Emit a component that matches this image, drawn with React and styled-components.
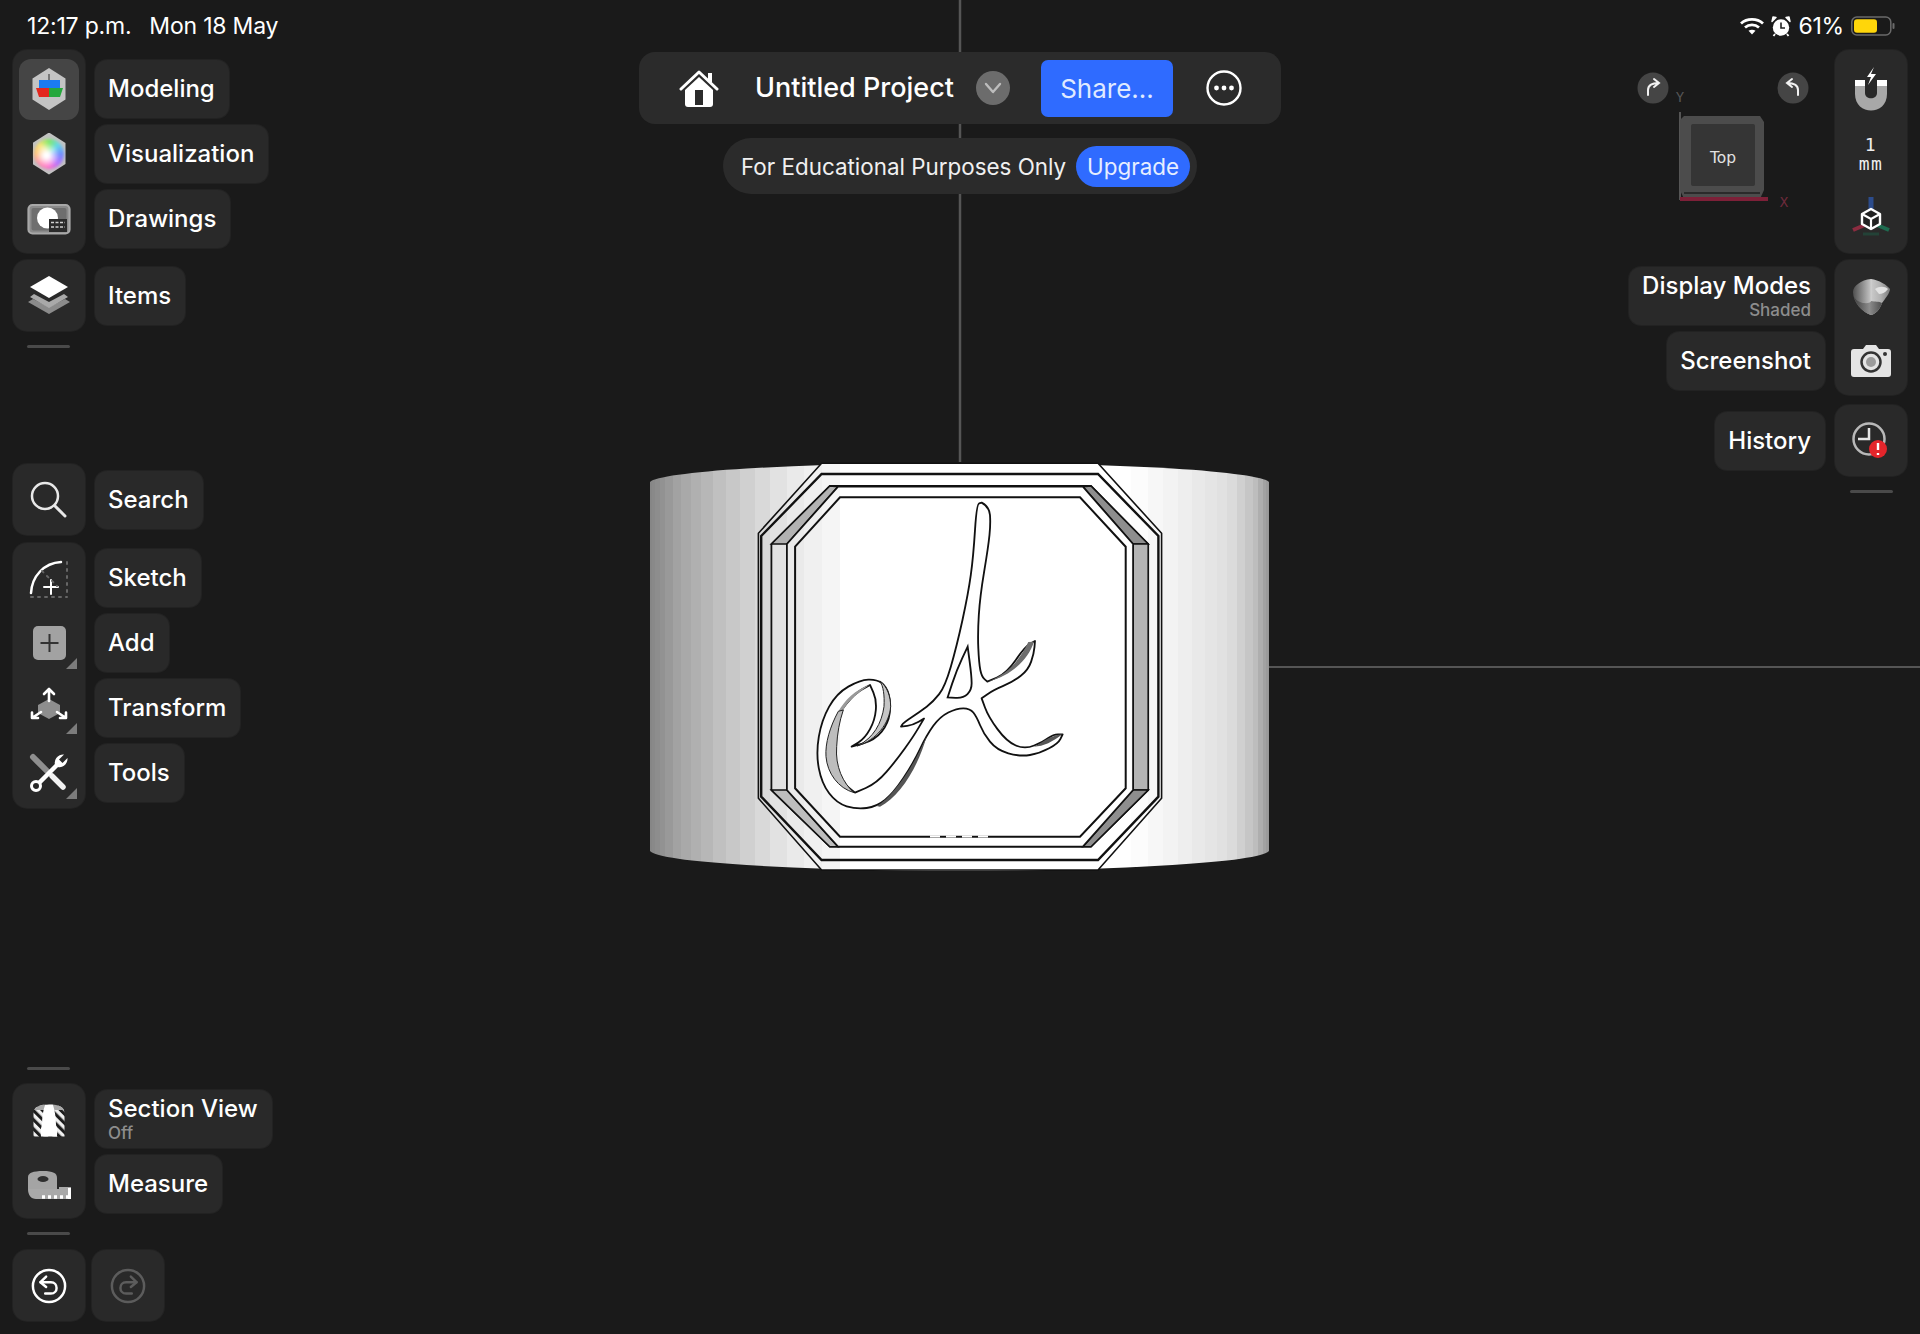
import React from "react";
import styled, { createGlobalStyle } from "styled-components";

const Global = createGlobalStyle`
  html, body { margin: 0; padding: 0; background: #1a1a1a; }
  * { box-sizing: border-box; }
`;

const Page = styled.div`
  position: relative;
  width: 1920px;
  height: 1334px;
  overflow: hidden;
  background: #1a1a1a;
  color: #fff;
  font-family: Inter, "Noto Sans", sans-serif;
  display: flex;
  flex-direction: column;
`;
const Scene = styled.svg`
  position: absolute;
  inset: 0;
`;
const StatusBar = styled.div`
  position: relative;
  height: 50px;
  flex: none;
  display: flex;
  justify-content: space-between;
  align-items: center;
  padding: 2px 25px 0 27px;
  font-size: 23px;
  letter-spacing: -0.2px;
`;
const StatusGroup = styled.div`
  display: flex;
  align-items: center;
  gap: ${(p) => p.$gap || 20}px;
`;
const Main = styled.div`
  position: relative;
  flex: 1;
  display: grid;
  grid-template-columns: 1fr 642px 1fr;
  padding: 0 13px 13px;
`;
const Side = styled.div`
  display: flex;
  flex-direction: column;
  align-items: ${(p) => (p.$right ? "flex-end" : "flex-start")};
`;
const Group = styled.div`
  display: flex;
  flex-direction: ${(p) => (p.$right ? "row-reverse" : "row")};
  gap: 10px;
  margin-top: ${(p) => p.$mt || 0}px;
`;
const Rail = styled.div`
  width: 72px;
  padding: ${(p) => p.$pad || "3px 0"};
  background: #292929;
  border-radius: 14px;
  box-shadow: 0 0 0 1px #222;
  display: flex;
  flex-direction: column;
`;
const RailButton = styled.div`
  position: relative;
  height: 65px;
  display: flex;
  align-items: center;
  justify-content: center;
  &::before {
    content: "";
    display: ${(p) => (p.$active ? "block" : "none")};
    position: absolute;
    inset: 3px 6px 1px;
    background: #454545;
    border-radius: 12px;
  }
  &::after {
    content: "";
    display: ${(p) => (p.$more ? "block" : "none")};
    position: absolute;
    right: 8px;
    bottom: 6px;
    border-style: solid;
    border-width: 0 0 11px 11px;
    border-color: transparent transparent #7c7c7c transparent;
  }
  > svg, > div { position: relative; }
`;
const LabelColumn = styled.div`
  display: flex;
  flex-direction: column;
  align-items: ${(p) => (p.$right ? "flex-end" : "flex-start")};
  padding: ${(p) => p.$pad || "3px 0"};
`;
const LabelSlot = styled.div`
  height: 65px;
  display: flex;
  align-items: center;
`;
const Label = styled.div`
  height: 58px;
  padding: 0 14px 0 13px;
  background: #292929;
  border-radius: 12px;
  box-shadow: 0 0 0 1px #222;
  display: flex;
  flex-direction: column;
  justify-content: center;
  align-items: ${(p) => (p.$right ? "flex-end" : "flex-start")};
  font-size: 24px;
  font-weight: 500;
  line-height: 27px;
  white-space: nowrap;
`;
const SubLabel = styled.span`
  margin-top: 2px;
  font-size: 17px;
  font-weight: 500;
  line-height: 19px;
  color: #8d8d8d;
`;
const Divider = styled.div`
  width: 43px;
  height: 3px;
  border-radius: 2px;
  background: #4a4a4a;
  margin: ${(p) => p.$m || "14px 14px"};
`;
const Spacer = styled.div`
  flex: 1;
`;
const Center = styled.div`
  display: flex;
  flex-direction: column;
  align-items: center;
  padding-top: 2px;
`;
const TopBar = styled.div`
  width: 642px;
  height: 72px;
  background: #2b2b2b;
  border-radius: 16px;
  display: flex;
  align-items: center;
  padding-left: 40px;
`;
const Title = styled.div`
  margin-left: 36px;
  padding-bottom: 2px;
  font-size: 27px;
  font-weight: 500;
  white-space: nowrap;
`;
const ChevronBadge = styled.div`
  margin-left: 22px;
  width: 34px;
  height: 34px;
  border-radius: 50%;
  background: #6c6c6c;
  display: flex;
  align-items: center;
  justify-content: center;
`;
const ShareButton = styled.div`
  margin-left: 31px;
  width: 132px;
  height: 57px;
  border-radius: 7px;
  background: #2f6bff;
  color: #dfe9ff;
  font-size: 26px;
  display: flex;
  align-items: center;
  justify-content: center;
`;
const MoreButton = styled.div`
  margin-left: 33px;
  display: flex;
`;
const NoticePill = styled.div`
  margin-top: 14px;
  height: 56px;
  padding: 0 7px 0 18px;
  background: #2b2b2b;
  border-radius: 28px;
  display: flex;
  align-items: center;
  gap: 10px;
  font-size: 22.4px;
  color: #f0f0f0;
  white-space: nowrap;
`;
const UpgradePill = styled.div`
  height: 41px;
  padding: 0 11px;
  border-radius: 21px;
  background: #2f6bff;
  color: #e6eeff;
  display: flex;
  align-items: center;
`;
const TopRight = styled.div`
  display: flex;
  align-items: flex-start;
`;
const RowPair = styled.div`
  display: flex;
  gap: 7px;
`;
const MiniMono = styled.div`
  font-family: "DejaVu Sans Mono", monospace;
  font-size: 18px;
  letter-spacing: 1.5px;
  line-height: 19px;
  text-align: center;
  color: #eee;
`;

/* Icons */
const Ic = ({ s = 44, children, ...r }) => (
  <svg width={s} height={s} viewBox="0 0 44 44" {...r}>{children}</svg>
);
const ModelIcon = () => (
  <Ic>
    <path d="M22 1 38.5 11.5V32.5L22 43 5.5 32.5V11.5Z" fill="#c4c4c4" />
    <path d="M21 7H23V13H21Z" fill="#777" />
    <path d="M12 13H33V21H12Z" fill="#1b7bf0" />
    <path d="M9 21H22V30H12Z" fill="#e3281f" />
    <path d="M22 21H36L33 30H22Z" fill="#25a83c" />
  </Ic>
);
const ColorWheel = styled.div`
  width: 33px;
  height: 42px;
  clip-path: polygon(50% 0, 100% 25%, 100% 75%, 50% 100%, 0 75%, 0 25%);
  background: #c2c2c2;
  display: flex;
  align-items: center;
  justify-content: center;
  &::before {
    content: "";
    width: 30px;
    height: 30px;
    border-radius: 50%;
    filter: blur(1.5px);
    background: radial-gradient(circle at 42% 55%, #fff 0 10%, transparent 55%),
      conic-gradient(#7fe86a, #62d8e8, #6f8cff, #b070ff, #ff5cc8, #ff6f9d, #ffb25a, #f7e36b, #7fe86a);
  }
`;
const DrawingsIcon = () => (
  <Ic>
    <rect x="1.5" y="8" width="41" height="28.5" rx="4" fill="#8a8a8a" stroke="#a8a8a8" strokeWidth="2.2" />
    <rect x="4.5" y="11" width="35" height="22.5" rx="2" fill="#6e6e6e" />
    <circle cx="20.5" cy="21" r="10.5" fill="#fff" />
    <rect x="22" y="22" width="18" height="13" fill="#2a2a2a" />
    <path d="M24 25.5H38M24 30H38" stroke="#d0d0d0" strokeWidth="1.6" strokeDasharray="3 1.5" />
  </Ic>
);
const LayersIcon = () => (
  <Ic>
    <path d="M22 30 38 22 43 25 22 37 1 25 6 22Z" transform="translate(0 3)" fill="#8b8b8b" />
    <path d="M22 25 37 17 41 20 22 31 3 20 7 17Z" transform="translate(0 3)" fill="#a9a9a9" />
    <path d="M22 2 41 13 22 24 3 13Z" fill="#fff" />
  </Ic>
);
const SearchIcon = () => (
  <Ic fill="none" stroke="#e8e8e8" strokeWidth="2.5" strokeLinecap="round">
    <circle cx="18" cy="18" r="13" />
    <path d="M28 28 38 38" strokeWidth="3" />
  </Ic>
);
const SketchIcon = () => (
  <Ic fill="none" stroke="#fff" strokeWidth="2.5" strokeLinecap="round">
    <path d="M4 37C5 20 17 7 34 6" />
    <path d="M24 24V38M17 31H31" strokeWidth="2" />
    <path d="M4 41H40M40 6V41M15 15 30 30" stroke="#666" strokeWidth="2" strokeDasharray="2 5" />
  </Ic>
);
const AddIcon = () => (
  <Ic>
    <rect x="6" y="5" width="33" height="34" rx="5" fill="#a2a2a2" />
    <path d="M22.5 13V31M13.5 22H31.5" stroke="#333" strokeWidth="2" />
  </Ic>
);
const TransformIcon = () => (
  <Ic fill="none" stroke="#fff" strokeWidth="2.6" strokeLinecap="round" strokeLinejoin="round">
    <path d="M22 13 33 19V27L22 33 11 27V19Z" fill="#8e8e8e" stroke="none" />
    <path d="M22 15V3M17 8 22 3 27 8" />
    <path d="M14 26 5 32M5 26.5V32H11" />
    <path d="M30 26 39 32M39 26.5V32H33" />
  </Ic>
);
const ToolsIcon = () => (
  <Ic fill="none" strokeLinecap="round">
    <path d="M6 6 20 20" stroke="#8f8f8f" strokeWidth="6" />
    <path d="M25 25 36 36" stroke="#f2f2f2" strokeWidth="5.5" />
    <path d="M11 33 30 14" stroke="#fff" strokeWidth="4.5" />
    <circle cx="9" cy="35" r="4.5" stroke="#fff" strokeWidth="3" fill="#292929" />
    <path d="M28.5 15.5A8.5 8.5 0 0 1 37 3.5L32 8.5 35.5 12 40.5 7A8.5 8.5 0 0 1 28.5 15.5Z" fill="#fff" />
  </Ic>
);
const SectionIcon = () => (
  <Ic>
    <defs>
      <clipPath id="dome"><path d="M6.5 17C6.5 10 11 7.5 22 7.5 33 7.5 37.5 10 37.5 17V39.5H6.5Z" /></clipPath>
      <pattern id="stripes" width="6.5" height="6.5" patternUnits="userSpaceOnUse" patternTransform="rotate(45)">
        <rect width="6.5" height="6.5" fill="#1c1c1c" />
        <rect width="6.5" height="3.4" fill="#efefef" />
      </pattern>
    </defs>
    <g clipPath="url(#dome)">
      <rect width="44" height="44" fill="url(#stripes)" />
      <rect y="6" width="44" height="7" fill="#a8a8a8" />
      <path d="M18 8H26C28 14 29 22 29 28 31 33 30 37 30 40H14C14 36 13 33 15 28 15 20 16 14 18 8Z" fill="#fff" />
    </g>
  </Ic>
);
const MeasureIcon = () => (
  <svg width="46" height="44" viewBox="0 0 46 44">
    <path d="M2 15C2 11 7 9 17 9 27 9 31 11 31 16V27H2Z" fill="#a4a4a4" />
    <ellipse cx="17" cy="17" rx="5.5" ry="3" fill="#2e2e2e" />
    <path d="M2 27H33V25H45V37H10C5 37 2 33 2 27Z" fill="#a9a9a9" />
    <path d="M16 35H44" stroke="#fff" strokeWidth="3.4" strokeDasharray="3 3" />
    <rect x="42" y="26" width="3" height="11" fill="#fff" />
  </svg>
);
const HistoryArrow = ({ flip, color, size = 36 }) => (
  <svg width={size} height={size} viewBox="0 0 38 38" fill="none" stroke={color} strokeWidth="2.6" strokeLinecap="round" strokeLinejoin="round">
    <g transform={flip ? "matrix(-1 0 0 1 38 0)" : undefined}>
      <circle cx="19" cy="19" r="17" />
      <path d="M16 9 10 15 16 20" />
      <path d="M10 15H21C29 15 29 27 21 27H15" />
    </g>
  </svg>
);
const MagnetIcon = () => (
  <Ic>
    <path d="M6 15H16V26C16 33 28 33 28 26V15H38V27C38 49 6 49 6 27Z" fill="#a8a8a8" />
    <rect x="6" y="13" width="10" height="6" fill="#fff" />
    <rect x="28" y="13" width="10" height="6" fill="#fff" />
    <path d="M25 0 18 10H22L19 18 27 7H22Z" fill="#fff" />
  </Ic>
);
const AxisIcon = () => (
  <Ic>
    <path d="M22 0V14" stroke="#2c4c8c" strokeWidth="5" />
    <path d="M16 28 4 33" stroke="#8c2c40" strokeWidth="4" />
    <path d="M28 28 40 33" stroke="#1f6b50" strokeWidth="4" />
    <path d="M14 37H30" stroke="#1f5b45" strokeWidth="3" opacity=".5" />
    <path d="M22 12 31 17V27L22 32 13 27V17Z" fill="#222" stroke="#fff" strokeWidth="2.4" strokeLinejoin="round" />
    <path d="M13 17 22 22 31 17M22 22V32" stroke="#fff" strokeWidth="2.2" fill="none" />
  </Ic>
);
const ShadeIcon = () => (
  <Ic>
    <defs>
      <linearGradient id="shade" x1="0" x2="1"><stop offset="0" stopColor="#4f4f4f" /><stop offset=".5" stopColor="#c9c9c9" /><stop offset=".75" stopColor="#b0b0b0" /><stop offset="1" stopColor="#7b7b7b" /></linearGradient>
      <linearGradient id="shadeLow" x1="0" x2="1"><stop offset="0" stopColor="#3f3f3f" /><stop offset=".55" stopColor="#8c8c8c" /><stop offset="1" stopColor="#4e4e4e" /></linearGradient>
    </defs>
    <path d="M4 18C4 12 12 6 22 5 30 6 38 11 41 15 41 19 36 25 33 29 31 35 27 40 22 41 13 38 4 28 4 18Z" fill="url(#shade)" />
    <path d="M5 23C10 31 22 30 22 27 26 28 30 27 33 29 31 35 27 40 22 41 13 38 7 30 5 23Z" fill="url(#shadeLow)" />
    <path d="M22 5V27" stroke="#d8d8d8" strokeWidth="1" opacity=".5" />
    <path d="M26 15C30 12 36 12 39 15 36 19 33 20 30 20Z" fill="#e2e2e2" />
  </Ic>
);
const CameraIcon = () => (
  <Ic>
    <path d="M5 10H14L17 6H27L30 10H39C41 10 42 11 42 13V35C42 37 41 38 39 38H5C3 38 2 37 2 35V13C2 11 3 10 5 10Z" fill="#e4e4e4" />
    <circle cx="22" cy="23" r="9.5" fill="#e4e4e4" stroke="#333" strokeWidth="2.5" />
    <circle cx="22" cy="23" r="5" fill="#9b9b9b" />
    <circle cx="36" cy="15" r="2" fill="#333" />
  </Ic>
);
const ClockIcon = () => (
  <Ic>
    <circle cx="20" cy="20" r="15.5" fill="none" stroke="#b8b8b8" strokeWidth="2.5" />
    <path d="M20 9V20H9" fill="none" stroke="#e6e6e6" strokeWidth="2.5" />
    <circle cx="29" cy="30" r="9" fill="#e4252b" />
    <path d="M29 24V31M29 34V36" stroke="#fff" strokeWidth="2.4" />
  </Ic>
);
const HomeIcon = () => (
  <svg width="40" height="38" viewBox="0 0 40 38">
    <path d="M2 20 20 3 38 20" fill="none" stroke="#fff" strokeWidth="3" strokeLinecap="round" strokeLinejoin="round" />
    <rect x="29" y="4" width="4" height="9" fill="#fff" />
    <path d="M6 21 20 8 34 21V35C34 37 33 38 31 38H9C7 38 6 37 6 35Z" fill="#fff" />
    <rect x="16" y="21" width="8" height="15" fill="#2b2b2b" />
  </svg>
);
const MoreIcon = () => (
  <svg width="36" height="36" viewBox="0 0 36 36" fill="none">
    <circle cx="18" cy="18" r="16.5" stroke="#fff" strokeWidth="2.4" />
    <circle cx="10.5" cy="18" r="2.4" fill="#fff" />
    <circle cx="18" cy="18" r="2.4" fill="#fff" />
    <circle cx="25.5" cy="18" r="2.4" fill="#fff" />
  </svg>
);
const ChevronIcon = () => (
  <svg width="18" height="12" viewBox="0 0 18 12" fill="none">
    <path d="M2 2 9 10 16 2" stroke="#bdbdbd" strokeWidth="2.4" strokeLinecap="round" strokeLinejoin="round" />
  </svg>
);
const WifiIcon = () => (
  <svg width="24" height="18" viewBox="0 0 24 18" fill="none" stroke="#fff" strokeWidth="2.8">
    <path d="M1 6.5C7 1 17 1 23 6.5" />
    <path d="M5 10.5C9 7 15 7 19 10.5" />
    <path d="M12 17.5 8.5 13.8C10.5 12.4 13.5 12.4 15.5 13.8Z" fill="#fff" stroke="none" />
  </svg>
);
const AlarmIcon = () => (
  <svg width="20" height="21" viewBox="0 0 20 21">
    <circle cx="10" cy="11.5" r="8.2" fill="#fff" />
    <path d="M10 6.5V12H14" stroke="#222" strokeWidth="1.6" fill="none" />
    <path d="M1 5.5 5 1.5 2 1ZM19 5.5 15 1.5 18 1Z" fill="#fff" stroke="#fff" strokeWidth="1.4" strokeLinejoin="round" />
    <path d="M4 18 2.5 20M16 18 17.5 20" stroke="#fff" strokeWidth="1.8" />
  </svg>
);
const BatteryIcon = () => (
  <svg width="44" height="20" viewBox="0 0 44 20">
    <rect x="0.8" y="1" width="39" height="18" rx="5" fill="none" stroke="#6a6a6a" strokeWidth="1.5" />
    <rect x="3" y="3.2" width="23" height="13.6" rx="3" fill="#ffd60a" />
    <rect x="41.5" y="7" width="2" height="6" rx="1" fill="#6a6a6a" />
  </svg>
);
const NavCube = () => (
  <svg width="205" height="165" viewBox="1630 50 205 165" style={{ display: "block" }}>
    <circle cx="1653" cy="88" r="15.5" fill="#454545" />
    <circle cx="1793" cy="88" r="15.5" fill="#454545" />
    <path d="M1648 95V90C1648 85 1652 83 1659 83M1654 79 1659 83 1654 87" fill="none" stroke="#f2f2f2" strokeWidth="2" strokeLinecap="round" />
    <path d="M1798 95V90C1798 85 1794 83 1787 83M1792 79 1787 83 1792 87" fill="none" stroke="#f2f2f2" strokeWidth="2" strokeLinecap="round" />
    <text x="1680" y="102" fontFamily="'DejaVu Sans Mono', monospace" fontSize="14" fill="#555" textAnchor="middle">Y</text>
    <path d="M1680 112V200" stroke="#555" strokeWidth="2" />
    <text x="1784" y="207" fontFamily="'DejaVu Sans Mono', monospace" fontSize="14" fill="#6e2a3c" textAnchor="middle">X</text>
    <path d="M1684 116H1760L1764 122V190L1760 199H1684L1680 190V120Z" fill="#4c4c4c" />
    <rect x="1691" y="124" width="64" height="62" rx="2" fill="#353535" />
    <rect x="1684" y="192" width="76" height="2" fill="#2a2a2a" />
    <rect x="1680" y="197" width="88" height="4" fill="#7d2038" />
    <text x="1723" y="163" fontFamily="'DejaVu Sans', sans-serif" fontSize="15.5" fill="#e2e2e2" textAnchor="middle">Top</text>
  </svg>
);

/* Ring model */
const facetStops = () => {
  const stops = [];
  const cx = 959, R = 310, N = 48;
  const shade = (x) => {
    const pts = [[649, 132], [680, 165], [720, 192], [770, 222], [800, 236], [835, 246], [850, 255], [1130, 255], [1180, 240], [1230, 222], [1255, 190], [1269, 150]];
    for (let i = 1; i < pts.length; i++) {
      if (x <= pts[i][0]) {
        const t = (x - pts[i - 1][0]) / (pts[i][0] - pts[i - 1][0]);
        return pts[i - 1][1] + t * (pts[i][1] - pts[i - 1][1]);
      }
    }
    return 150;
  };
  for (let i = 0; i < N; i++) {
    const a = -Math.PI / 2 + (Math.PI * i) / N;
    const b = -Math.PI / 2 + (Math.PI * (i + 1)) / N;
    const x0 = cx + R * Math.sin(a), x1 = cx + R * Math.sin(b);
    const v = Math.round(shade((x0 + x1) / 2));
    const col = `rgb(${v},${v},${v})`;
    stops.push(<stop key={i + "a"} offset={(x0 - (cx - R)) / (2 * R)} stopColor={col} />);
    stops.push(<stop key={i + "b"} offset={(x1 - (cx - R)) / (2 * R)} stopColor={col} />);
  }
  return stops;
};
const zp = (list) => list.map(([x, y]) => `${(640 + x / 2.45).toFixed(1)},${(450 + y / 3).toFixed(1)}`).join(" ");
const poly = {
  A: [[445, 40], [1122, 40], [1278, 250], [1278, 1045], [1122, 1260], [445, 1260], [290, 1045], [290, 250]],
  B: [[445, 72], [1122, 72], [1270, 258], [1270, 1040], [1122, 1230], [445, 1230], [297, 1040], [297, 258]],
  C: [[465, 108], [1105, 108], [1245, 282], [1245, 1020], [1105, 1190], [465, 1190], [322, 1020], [322, 282]],
  D: [[485, 110], [1085, 110], [1208, 282], [1208, 1020], [1085, 1190], [485, 1190], [360, 1020], [360, 282]],
  E: [[490, 142], [1078, 142], [1190, 290], [1190, 1015], [1078, 1160], [490, 1160], [380, 1015], [380, 290]],
};
const bevels = [
  { p: [poly.C[7], poly.C[0], poly.D[0], poly.D[7]], f: "#b2b2b2" },
  { p: [poly.C[1], poly.C[2], poly.D[2], poly.D[1]], f: "#8e8e8e" },
  { p: [poly.C[2], poly.C[3], poly.D[3], poly.D[2]], f: "#b4b4b4" },
  { p: [poly.C[3], poly.C[4], poly.D[4], poly.D[3]], f: "#8e8e8e" },
  { p: [poly.C[5], poly.C[6], poly.D[6], poly.D[5]], f: "#bdbdbd" },
];
const smooth = (pts) => {
  let d = `M${pts[0][0]} ${pts[0][1]}`;
  for (let i = 1; i < pts.length; i++) {
    const p = pts[i], q = pts[(i + 1) % pts.length];
    d += ` Q${p[0]} ${p[1]} ${(p[0] + q[0]) / 2} ${(p[1] + q[1]) / 2}`;
  }
  return d + "Z";
};
const c = (x, y) => [[x, y], [x, y]];
const letterOutline = [
  [605, 38], [628, 50], [632, 100], [625, 170], [600, 320], [593, 430], [597, 520], [605, 560],
  ...c(622, 575), [680, 550], [735, 470], ...c(765, 453), [762, 490], [745, 540], [700, 575], [640, 600],
  ...c(605, 625), [625, 680], [680, 755], [735, 778], [790, 755], [820, 733], ...c(848, 733), [835, 760], [780, 790], [720, 800], [650, 780], [610, 730], [590, 680], [570, 655], [530, 655],
  [480, 680], [440, 735], [400, 820], [340, 910], [290, 950], [230, 958], [170, 940], [125, 880], [108, 790], [125, 690], [170, 610], [240, 570], [290, 568], [320, 590], [333, 640], [325, 700], [285, 750],
  ...c(215, 770), [255, 745], [285, 690], [290, 630], ...c(270, 585), [225, 610], [175, 670], [150, 740], [160, 820], [190, 880], ...c(225, 908), [290, 880], [350, 810], [400, 740],
  ...c(432, 686), [400, 705], ...c(363, 710), [370, 698], [420, 665], [460, 635], [495, 590], [530, 470], [565, 310], [580, 200], [590, 42],
];
const letterHole = [...c(563, 470), [575, 560], [575, 600], [550, 625], ...c(503, 622), [530, 540]];

const RingScene = () => (
  <Scene width="1920" height="1334" viewBox="0 0 1920 1334">
    <defs>
      <linearGradient id="band" gradientUnits="userSpaceOnUse" x1="649" x2="1269" y1="0" y2="0">{facetStops()}</linearGradient>
    </defs>
    <path d="M960 0V462" stroke="#555" strokeWidth="2.5" />
    <path d="M1268 667H1920" stroke="#555" strokeWidth="2" />
    <path d="M650 482A310 20 0 0 1 1269 482V851A310 21 0 0 1 650 851Z" fill="url(#band)" />
    <polygon points={zp(poly.A)} fill="url(#band)" stroke="#111" strokeWidth="1.6" />
    <polygon points={zp(poly.B)} fill="url(#band)" stroke="#111" strokeWidth="2.4" />
    <polygon points={zp(poly.C)} fill="url(#band)" stroke="#111" strokeWidth="1.8" />
    {bevels.map((b, i) => <polygon key={i} points={zp(b.p)} fill={b.f} stroke="#111" strokeWidth="1.6" />)}
    <polygon points={zp(poly.D)} fill="url(#band)" stroke="#111" strokeWidth="1.8" />
    <polygon points={zp(poly.E)} fill="url(#band)" stroke="#111" strokeWidth="2" />
    <path d="M930 836.5H990" stroke="#fff" strokeWidth="2.2" strokeDasharray="10 6" />
    <g transform="translate(780 490) scale(.3333)">
      <path d={smooth(letterOutline)} fill="#fff" stroke="#111" strokeWidth="5.5" strokeLinejoin="round" />
      <path d={smooth(letterHole)} fill="#fff" stroke="#111" strokeWidth="5.5" />
      <path d="M175 664C195 630 225 600 268 585 240 605 205 630 190 660Z" fill="#9a9a9a" />
      <path d="M175 664C150 710 135 760 138 800 142 850 175 895 222 908 190 880 165 830 170 770 172 730 178 695 190 660Z" fill="#bdbdbd" stroke="#222" strokeWidth="3" />
      <path d="M300 573C322 590 332 620 332 650 328 700 290 750 232 768 280 745 305 700 312 650 314 615 310 590 300 573Z" fill="#c6c6c6" stroke="#222" strokeWidth="3" />
      <path d="M622 575C680 555 720 510 745 456L762 455C745 510 690 560 622 575Z" fill="#6d6d6d" />
      <path d="M762 770C785 760 805 738 846 733 820 755 790 770 762 770Z" fill="#555" />
      <path d="M290 948C340 920 400 830 440 738 415 830 360 920 300 950Z" fill="#555" />
    </g>
  </Scene>
);

const ToolGroup = ({ items, right, pad, mt }) => (
  <Group $right={right} $mt={mt}>
    <Rail $pad={pad}>
      {items.map((it) => (
        <RailButton key={it.name} $active={it.active} $more={it.more}>{it.icon}</RailButton>
      ))}
    </Rail>
    <LabelColumn $right={right} $pad={pad}>
      {items.map((it) => (
        <LabelSlot key={it.name}>
          <Label $right={right}>
            {it.name}
            {it.sub && <SubLabel>{it.sub}</SubLabel>}
          </Label>
        </LabelSlot>
      ))}
    </LabelColumn>
  </Group>
);

export default function App() {
  return (
    <Page>
      <Global />
      <RingScene />
      <StatusBar>
        <StatusGroup $gap={18}>
          <span>12:17 p.m.</span>
          <span>Mon 18 May</span>
        </StatusGroup>
        <StatusGroup $gap={7}>
          <WifiIcon />
          <AlarmIcon />
          <span>61%</span>
          <BatteryIcon />
        </StatusGroup>
      </StatusBar>
      <Main>
        <Side>
          <ToolGroup
            pad="6px 0 2px"
            items={[
              { name: "Modeling", icon: <ModelIcon />, active: true },
              { name: "Visualization", icon: <ColorWheel /> },
              { name: "Drawings", icon: <DrawingsIcon /> },
            ]}
          />
          <ToolGroup mt={7} items={[{ name: "Items", icon: <LayersIcon /> }]} />
          <Divider />
          <ToolGroup mt={102} items={[{ name: "Search", icon: <SearchIcon /> }]} />
          <ToolGroup
            mt={8}
            pad="2px 0 3px"
            items={[
              { name: "Sketch", icon: <SketchIcon /> },
              { name: "Add", icon: <AddIcon />, more: true },
              { name: "Transform", icon: <TransformIcon />, more: true },
              { name: "Tools", icon: <ToolsIcon />, more: true },
            ]}
          />
          <Spacer />
          <Divider />
          <ToolGroup
            pad="2px 0"
            items={[
              { name: "Section View", sub: "Off", icon: <SectionIcon /> },
              { name: "Measure", icon: <MeasureIcon /> },
            ]}
          />
          <Divider $m="14px 14px 15px" />
          <RowPair>
            <Rail $pad="3px 0"><RailButton><HistoryArrow color="#fff" /></RailButton></Rail>
            <Rail $pad="3px 0"><RailButton><HistoryArrow flip color="#5c5c5c" /></RailButton></Rail>
          </RowPair>
        </Side>
        <Center>
          <TopBar>
            <HomeIcon />
            <Title>Untitled Project</Title>
            <ChevronBadge><ChevronIcon /></ChevronBadge>
            <ShareButton>Share...</ShareButton>
            <MoreButton><MoreIcon /></MoreButton>
          </TopBar>
          <NoticePill>
            For Educational Purposes Only
            <UpgradePill>Upgrade</UpgradePill>
          </NoticePill>
        </Center>
        <Side $right>
          <TopRight>
            <NavCube />
            <Rail $pad="6px 0 2px">
              <RailButton><MagnetIcon /></RailButton>
              <RailButton><MiniMono>1<br />mm</MiniMono></RailButton>
              <RailButton><AxisIcon /></RailButton>
            </Rail>
          </TopRight>
          <ToolGroup
            mt={7}
            right
            pad="3px 0 2px"
            items={[
              { name: "Display Modes", sub: "Shaded", icon: <ShadeIcon /> },
              { name: "Screenshot", icon: <CameraIcon /> },
            ]}
          />
          <ToolGroup mt={10} right items={[{ name: "History", icon: <ClockIcon /> }]} />
          <Divider />
        </Side>
      </Main>
    </Page>
  );
}
